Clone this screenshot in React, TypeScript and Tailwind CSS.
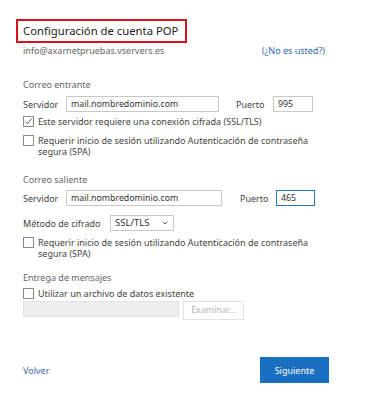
import { ChevronDown } from "lucide-react";

function Check({ checked = false }: { checked?: boolean }) {
  return (
    <span className="w-[11px] h-[11px] border border-[#8a8a8a] bg-white flex items-center justify-center shrink-0">
      {checked && (
        <svg width="9" height="9" viewBox="0 0 9 9">
          <path d="M1.2 4.6 L3.4 6.8 L7.8 1.6" fill="none" stroke="#555" strokeWidth="1" />
        </svg>
      )}
    </span>
  );
}

function Field({ value, className, focus = false }: { value: string; className: string; focus?: boolean }) {
  return (
    <div
      className={`h-[16px] border ${focus ? "border-[#2b72c4]" : "border-[#c8c8c8]"} bg-white flex items-center px-[4px] text-[8.8px] text-[#333] ${className}`}
    >
      {value}
    </div>
  );
}

export default function App() {
  return (
    <div
      className="w-[372px] h-[416px] bg-white text-[#444] text-[9px] leading-none"
      style={{ fontFamily: '"Segoe UI", "Noto Sans", sans-serif' }}
    >
      <div className="pt-[19px] pl-[16px]">
        <div className="w-[171px] h-[24px] border-2 border-[#d9121c] flex items-center pl-[5px] text-[11.3px] text-[#222] whitespace-nowrap">
          Configuración de cuenta POP
        </div>
      </div>

      <div className="pl-[23px] pr-[47px]">
        <div className="flex justify-between mt-[3px] text-[#666]">
          <span>info@axarnetpruebas.vservers.es</span>
          <span className="text-[#2a6cb5]">(¿No es usted?)</span>
        </div>

        {/* Correo entrante */}
        <div className="mt-[25px] text-[#666]">Correo entrante</div>
        <div className="flex items-center mt-[7px]">
          <span className="w-[43px]">Servidor</span>
          <Field value="mail.nombredominio.com" className="w-[153px]" />
          <span className="ml-[17px] w-[37px]">Puerto</span>
          <Field value="995" className="w-[40px]" />
        </div>
        <div className="flex items-center gap-[4px] mt-[4px]">
          <Check checked />
          <span>Este servidor requiere una conexión cifrada (SSL/TLS)</span>
        </div>
        <div className="flex gap-[4px] mt-[8px]">
          <Check />
          <span className="leading-[11px] w-[275px]">
            Requerir inicio de sesión utilizando Autenticación de contraseña segura (SPA)
          </span>
        </div>

        {/* Correo saliente */}
        <div className="mt-[18px] text-[#666]">Correo saliente</div>
        <div className="flex items-center mt-[6px]">
          <span className="w-[43px]">Servidor</span>
          <Field value="mail.nombredominio.com" className="w-[156px]" />
          <span className="ml-[18px] w-[36px]">Puerto</span>
          <Field value="465" className="w-[39px]" focus />
        </div>
        <div className="flex items-center mt-[9px]">
          <span className="w-[87px]">Método de cifrado</span>
          <div className="h-[16px] w-[64px] border border-[#c8c8c8] flex items-center justify-between px-[4px] text-[9.5px] text-[#333]">
            SSL/TLS
            <ChevronDown size={8} strokeWidth={3} className="text-[#666]" />
          </div>
        </div>
        <div className="flex gap-[4px] mt-[6px]">
          <Check />
          <span className="leading-[11px] w-[275px]">
            Requerir inicio de sesión utilizando Autenticación de contraseña segura (SPA)
          </span>
        </div>

        {/* Entrega de mensajes */}
        <div className="mt-[14px] text-[#666]">Entrega de mensajes</div>
        <div className="flex items-center gap-[4px] mt-[6px]">
          <Check />
          <span>Utilizar un archivo de datos existente</span>
        </div>
        <div className="flex items-start gap-[4px] mt-[2px]">
          <div className="w-[156px] h-[16px] bg-[#efefef] border border-[#e2e2e2]" />
          <div className="w-[61px] h-[19px] border border-[#e2e2e2] flex items-center justify-center text-[#b5b5b5] text-[8.8px]">
            Examinar...
          </div>
        </div>

        <div className="flex justify-between items-center mt-[37px]">
          <span className="text-[#3a6aa3] text-[9px]">Volver</span>
          <div className="w-[69px] h-[26px] bg-[#1a6fc1] text-white flex items-center justify-center text-[9px] mr-[-4px]">
            Siguiente
          </div>
        </div>
      </div>
    </div>
  );
}
